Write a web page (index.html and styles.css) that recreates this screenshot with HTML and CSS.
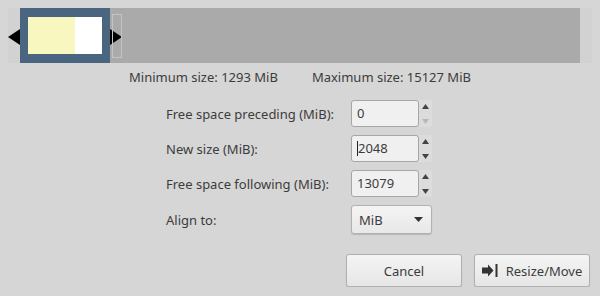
FILE: index.html
```html
<!DOCTYPE html>
<html lang="en">
<head>
    <meta charset="UTF-8">
    <title>Resize/Move</title>
    <link rel="stylesheet" href="styles.css">
</head>
<body>
    <div class="partbar">
        <div class="unalloc">
            <div class="part">
                <div class="used"></div>
                <div class="unused"></div>
            </div>
        </div>
        <div class="handle-left"></div>
        <div class="handle-right"></div>
        <div class="ghost"></div>
    </div>

    <div class="limits">
        <span>Minimum size: 1293 MiB</span>
        <span>Maximum size: 15127 MiB</span>
    </div>

    <div class="form">
        <label>Free space preceding (MiB):</label>
        <div class="spin">
            <div class="entry">0</div>
            <div class="arrows">
                <svg width="7" height="22" viewBox="0 0 7 22"><path d="M3.5 1 L7 6 H0 Z" fill="#444"/><path d="M0 16 H7 L3.5 21 Z" fill="#b8b8b8"/></svg>
            </div>
        </div>

        <label>New size (MiB):</label>
        <div class="spin">
            <div class="entry"><span class="caret"></span>2048</div>
            <div class="arrows">
                <svg width="7" height="22" viewBox="0 0 7 22"><path d="M3.5 1 L7 6 H0 Z" fill="#444"/><path d="M0 16 H7 L3.5 21 Z" fill="#444"/></svg>
            </div>
        </div>

        <label>Free space following (MiB):</label>
        <div class="spin">
            <div class="entry">13079</div>
            <div class="arrows">
                <svg width="7" height="22" viewBox="0 0 7 22"><path d="M3.5 1 L7 6 H0 Z" fill="#444"/><path d="M0 16 H7 L3.5 21 Z" fill="#444"/></svg>
            </div>
        </div>

        <label>Align to:</label>
        <div class="combo">
            <span>MiB</span>
            <svg width="9" height="5" viewBox="0 0 9 5"><path d="M0 0 H9 L4.5 5 Z" fill="#333"/></svg>
        </div>
    </div>

    <div class="actions">
        <button class="btn">Cancel</button>
        <button class="btn">
            <svg width="18" height="13" viewBox="0 0 18 13"><path d="M0 3.5 H6 V0.5 L11.5 6.5 L6 12.5 V9.5 H0 Z" fill="#333"/><rect x="13.5" y="0" width="2" height="13" fill="#333"/></svg>
            Resize/Move
        </button>
    </div>
</body>
</html>
```

FILE: styles.css
```css
body {
    margin: 0;
    background-color: #d6d6d6;
    font-family: "Noto Sans", sans-serif;
    font-size: 13px;
    color: #3c3c3c;
}
.partbar {
    position: relative;
    margin: 8px 8px 0 8px;
    height: 55px;
    padding: 0 12px;
    background-color: #d2d2d2;
    display: flex;
}
.unalloc {
    flex: 1;
    background-color: #aaaaaa;
    display: flex;
}
.part {
    width: 90px;
    background-color: #4a6580;
    padding: 9px 8px;
    display: flex;
    box-sizing: border-box;
}
.used {
    width: 47px;
    background-color: #f7f7bf;
}
.unused {
    flex: 1;
    background-color: #ffffff;
}
.handle-left,
.handle-right {
    position: absolute;
    top: 21px;
    width: 0;
    height: 0;
    border-top: 8px solid transparent;
    border-bottom: 8px solid transparent;
}
.handle-left {
    left: 0;
    border-right: 12px solid #000;
}
.handle-right {
    left: 102px;
    border-left: 12px solid #000;
}
.ghost {
    position: absolute;
    left: 104px;
    top: 6px;
    width: 8px;
    height: 42px;
    border: 1px solid #c4c4c4;
}
.limits {
    display: flex;
    margin: 5px 0 0 129px;
    height: 18px;
    line-height: 18px;
}
.limits span + span {
    margin-left: 34px;
}
.form {
    display: grid;
    grid-template-columns: 185px 81px;
    row-gap: 8px;
    margin: 14px 0 0 166px;
    align-items: center;
}
.spin {
    display: flex;
    height: 27px;
}
.entry {
    flex: 1;
    background-color: #f0f0f0;
    border: 1px solid #a6a6a6;
    border-radius: 3px;
    padding-left: 5px;
    line-height: 25px;
    display: flex;
    align-items: center;
}
.caret {
    display: inline-block;
    width: 1px;
    height: 15px;
    background-color: #222;
}
.arrows {
    width: 13px;
    display: flex;
    align-items: center;
    justify-content: center;
    background-color: #dcdcdc;
    border-radius: 0 3px 3px 0;
}
.arrows svg {
    display: block;
}
.combo {
    height: 29px;
    box-sizing: border-box;
    display: flex;
    align-items: center;
    justify-content: space-between;
    padding: 0 8px 0 7px;
    background: linear-gradient(#f4f4f4, #e8e8e8);
    border: 1px solid #b2b2b2;
    border-radius: 3px;
    box-shadow: 0 1px 1px rgba(0, 0, 0, 0.15);
}
.actions {
    display: flex;
    justify-content: flex-end;
    gap: 12px;
    margin: 20px 10px 0 0;
}
.btn {
    width: 116px;
    height: 33px;
    display: flex;
    align-items: center;
    justify-content: center;
    gap: 6px;
    background: linear-gradient(#f4f4f4, #e6e6e6);
    border: 1px solid #b0b0b0;
    border-radius: 3px;
    box-shadow: 0 1px 1px rgba(0, 0, 0, 0.15);
    font-family: "Noto Sans", sans-serif;
    font-size: 13px;
    color: #3c3c3c;
    padding: 0;
}
```
